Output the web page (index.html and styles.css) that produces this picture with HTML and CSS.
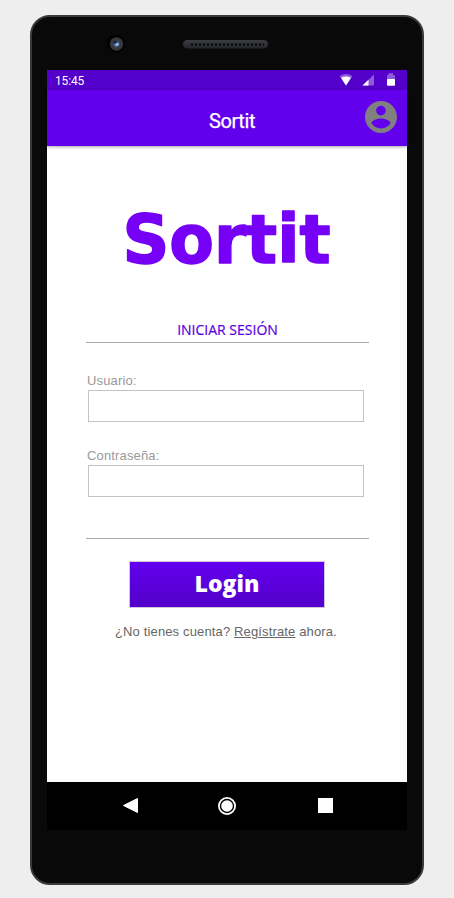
FILE: index.html
```html
<!DOCTYPE html>
<html lang="es">
<head>
<meta charset="utf-8">
<title>Sortit</title>
<link rel="stylesheet" href="styles.css">
</head>
<body>
<div class="phone">
  <div class="bezel">
    <svg class="hardware" width="390" height="53" viewBox="32 17 390 53">
      <defs>
        <radialGradient id="lens"><stop offset="0" stop-color="#78a4e0"/><stop offset=".3" stop-color="#526a90"/><stop offset=".55" stop-color="#343a42"/><stop offset="1" stop-color="#34373b"/></radialGradient>
        <linearGradient id="grille" x2="0" y2="1"><stop offset="0" stop-color="#3d3e41"/><stop offset="1" stop-color="#232427"/></linearGradient>
      </defs>
      <circle cx="116" cy="43.5" r="9" fill="#020202"/>
      <circle cx="116.5" cy="44" r="6.7" fill="url(#lens)"/>
      <circle cx="115.3" cy="42.2" r="1.8" fill="#182642"/>
      <circle cx="117" cy="44.3" r="1.5" fill="#8dbcf7"/>
      <rect x="183" y="40" width="85" height="8.5" rx="4.2" fill="url(#grille)"/>
      <path d="M191 44.5H264" stroke="#050506" stroke-width="2" stroke-dasharray="2 2"/>
    </svg>
  </div>
  <div class="screen">
    <div class="status">
      <span>15:45</span>
      <svg class="signals" width="70" height="20" viewBox="337 70 70 20" fill="#fff">
        <path d="M339.5 76Q346 72 352.5 76L346 85.5Z" opacity=".35"/>
        <path d="M341 77.7Q346 75.5 351 77.7L346 85.5Z"/>
        <path d="M362.5 85.5L374 74.5V85.5Z" opacity=".35"/>
        <path d="M362.5 85.5L368.5 79.7V85.5Z"/>
        <path d="M387 75.5L388.5 74.5V73.3H393V74.5L395 75.5V79H387Z" opacity=".35"/>
        <rect x="387" y="79" width="8" height="6.7" rx=".7"/>
      </svg>
    </div>
    <header class="bar">
      <h1>Sortit</h1>
      <svg class="account" width="32" height="32" viewBox="2 2 20 20"><path fill="#808080" d="M12 2C6.48 2 2 6.48 2 12s4.48 10 10 10 10-4.48 10-10S17.52 2 12 2zm0 3c1.66 0 3 1.34 3 3s-1.34 3-3 3-3-1.34-3-3 1.34-3 3-3zm0 14.2c-2.5 0-4.71-1.28-6-3.22.03-1.99 4-3.08 6-3.08s5.97 1.09 6 3.08c-1.29 1.94-3.5 3.22-6 3.22z"/></svg>
    </header>
    <main>
      <svg class="logo" width="220" height="80" viewBox="117 200 220 80"><text x="122.5" y="263" textLength="208" lengthAdjust="spacingAndGlyphs">Sortit</text></svg>
      <h2><span>INICIAR SESIÓN</span></h2>
      <form>
        <label for="user">Usuario:</label>
        <input id="user" type="text">
        <label for="pass">Contraseña:</label>
        <input id="pass" type="password">
        <div class="rule"></div>
        <button type="button">Login</button>
      </form>
      <p>¿No tienes cuenta? <u>Regístrate</u> ahora.</p>
    </main>
    <nav>
      <svg width="360" height="48" viewBox="47 782 360 48" fill="#fff">
        <path d="M123.5 805.5L137.5 798.5V812.5Z" stroke="#fff" stroke-linejoin="round"/>
        <circle cx="227" cy="806" r="8.1" fill="none" stroke="#fff" stroke-width="1.8"/>
        <circle cx="227" cy="806" r="5.8"/>
        <rect x="318" y="798" width="15" height="15"/>
      </svg>
    </nav>
  </div>
</div>
</body>
</html>
```
FILE: styles.css
```css
* { box-sizing: border-box; }
body {
  margin: 0;
  padding: 15px 30px 13px;
  height: 898px;
  overflow: hidden;
  background: #eee;
  font-family: "Liberation Sans", Arial, sans-serif;
}
.phone {
  width: 394px;
  height: 870px;
  border: 2px solid #37393a;
  border-radius: 20px;
  background: #090909;
}
.bezel { height: 53px; }
svg { display: block; }
.screen {
  display: flex;
  flex-direction: column;
  width: 360px;
  height: 760px;
  margin-left: 15px;
  background: #fff;
}
.status {
  display: flex;
  justify-content: space-between;
  height: 20px;
  padding-left: 8px;
  background: #5300ca;
  color: #fff;
  font: 12px/22px Roboto, sans-serif;
  letter-spacing: -.15px;
}
.bar {
  display: grid;
  grid-template-columns: 42px 1fr 42px;
  height: 56px;
  background: #6200ee;
  box-shadow: 0 1px 3px rgba(0, 0, 0, .35);
}
.bar h1 {
  grid-column: 2;
  margin: 0;
  padding-left: 10px;
  color: #fff;
  font: 20px/62px Roboto, sans-serif;
  letter-spacing: -.4px;
  -webkit-text-stroke: .25px #fff;
  text-align: center;
}
.account { margin: 11px 0 0; }
main { flex: 1; padding: 54px 38px 0 39px; }
.logo { margin-left: 31px; overflow: visible; }
.logo text {
  font: 700 67px "DejaVu Sans", sans-serif;
  fill: #7600f5;
  stroke: #7600f5;
  stroke-width: 1.5;
  stroke-linejoin: round;
}
h2 {
  height: 63px;
  margin: 0;
  padding-top: 41px;
  border-bottom: 1px solid #aaa;
  color: #5b00e4;
  font: 14px/18px "Open Sans", sans-serif;
  -webkit-text-stroke: .2px #5b00e4;
  text-align: center;
}
form { padding-top: 29px; }
label {
  display: block;
  height: 18px;
  padding-left: 1px;
  color: #999;
  font-size: 13px;
  line-height: 17px;
  letter-spacing: .15px;
}
input {
  display: block;
  width: 276px;
  height: 32px;
  margin: 0 0 25px 2px;
  border: 1px solid #c3c3c3;
  background: #fff;
}
.rule { height: 17px; border-bottom: 1px solid #aaa; }
button {
  display: block;
  width: 196px;
  height: 47px;
  margin: 22px 0 0 43px;
  padding: 0 0 4px;
  border: 1px solid #cfc5dd;
  background: linear-gradient(#6200ee, #5200c8);
  color: #fff;
  font: 800 23px/32px "Open Sans", sans-serif;
}
p {
  margin: 15px 0 0 -1px;
  padding-left: 30px;
  color: #666;
  font-size: 13px;
  line-height: 17px;
  letter-spacing: .14px;
  white-space: nowrap;
}
nav { height: 48px; background: #000; }
```
